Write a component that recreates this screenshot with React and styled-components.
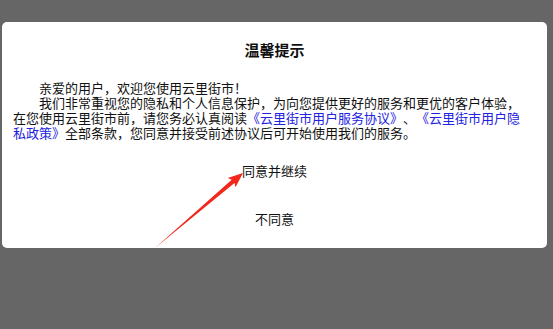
import React from "react";
import styled, { createGlobalStyle } from "styled-components";

const GlobalStyle = createGlobalStyle`
  html, body {
    margin: 0;
    padding: 0;
    background: #666666;
  }
  body {
    font-family: "Noto Sans CJK SC", "Noto Sans", sans-serif;
    text-spacing-trim: space-all;
  }
`;

const Page = styled.div`
  position: relative;
  width: 553px;
  height: 329px;
  padding-top: 22px;
  box-sizing: border-box;
  overflow: hidden;
`;

const Dialog = styled.div`
  margin: 0 6px 0 2px;
  background: #ffffff;
  border-radius: 5px;
  padding: 18px 20px 6px 11px;
  display: flex;
  flex-direction: column;
`;

const Title = styled.h2`
  margin: 0;
  font-size: 15px;
  line-height: 20px;
  font-weight: 700;
  color: #111;
  text-align: center;
  padding-left: 9px;
`;

const Content = styled.div`
  margin-top: 20px;
  font-size: 13px;
  line-height: 15px;
  color: #111;
  text-spacing-trim: space-all;
`;

const Para = styled.p`
  margin: 0;
  text-indent: 2em;
`;

const Link = styled.span`
  color: #2121e0;
`;

const Actions = styled.div`
  margin-top: 6px;
  display: flex;
  flex-direction: column;
`;

const Action = styled.div`
  height: 48px;
  display: flex;
  align-items: center;
  justify-content: center;
  padding-left: 9px;
  font-size: 13px;
  color: #111;
`;

const Annotation = styled.svg`
  position: absolute;
  left: 0;
  top: 0;
  pointer-events: none;
`;

export default function App() {
  return (
    <>
      <GlobalStyle />
      <Page>
        <Dialog>
          <Title>温馨提示</Title>
          <Content>
            <Para>亲爱的用户，欢迎您使用云里街市！</Para>
            <Para>
              我们非常重视您的隐私和个人信息保护，为向您提供更好的服务和更优的客户体验，在您使用云里街市前，请您务必认真阅读
              <Link>《云里街市用户服务协议》</Link>、<Link>《云里街市用户隐私政策》</Link>
              全部条款，您同意并接受前述协议后可开始使用我们的服务。
            </Para>
          </Content>
          <Actions>
            <Action>同意并继续</Action>
            <Action>不同意</Action>
          </Actions>
        </Dialog>
        <Annotation width="553" height="329" viewBox="0 0 553 329">
          <polygon
            points="155,248 231.7,179.7 227.7,178.1 243,173 235.5,187.3 234.5,183.1"
            fill="#f2271d"
          />
        </Annotation>
      </Page>
    </>
  );
}
